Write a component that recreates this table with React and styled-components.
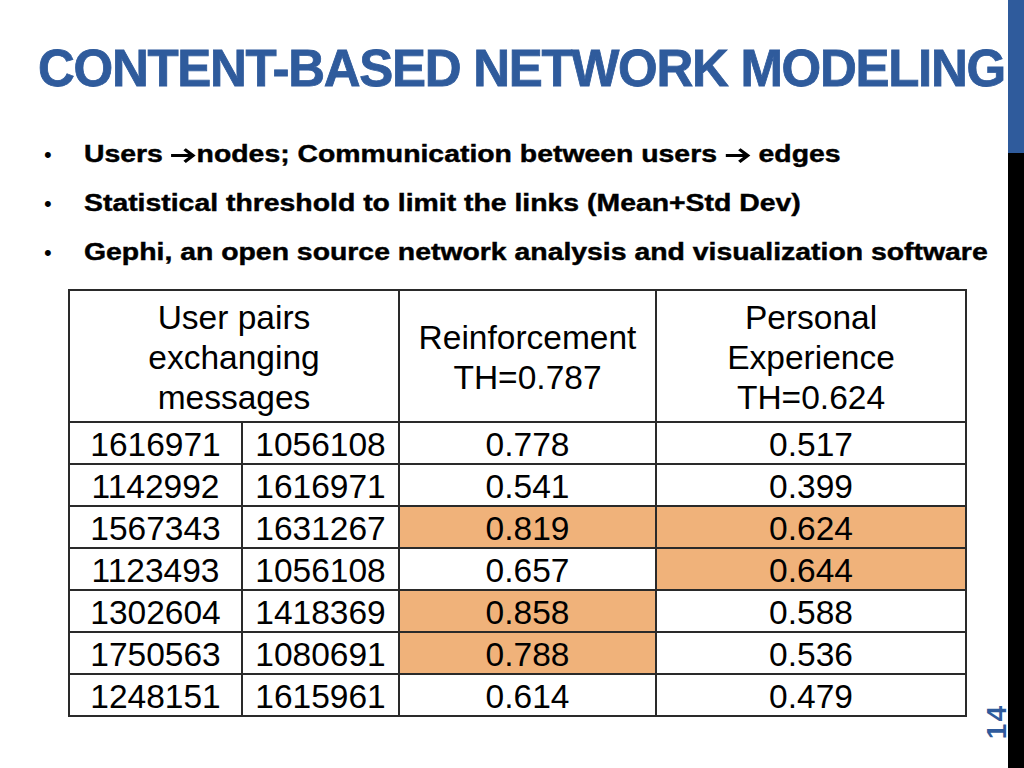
import React from "react";
import styled, { createGlobalStyle } from "styled-components";

const GlobalStyle = createGlobalStyle`
  html, body { margin: 0; padding: 0; background: #ffffff; }
  body { font-family: "Liberation Sans", Arial, sans-serif; color: #000; }
`;

const BLUE = "#2f5b9c";
const ORANGE = "#f0b27a";

const Slide = styled.div`
  position: relative;
  display: flex;
  width: 1024px;
  height: 768px;
  overflow: hidden;
  background: #fff;
`;

const Main = styled.main`
  flex: 1;
  display: flex;
  flex-direction: column;
  padding-left: 38px;
`;

const SideBar = styled.div`
  width: 16px;
  display: flex;
  flex-direction: column;
`;

const SideBlue = styled.div`
  height: 153px;
  background: ${BLUE};
`;

const SideBlack = styled.div`
  flex: 1;
  background: #000;
`;

const Title = styled.h1`
  margin: 43px 0 0 0;
  font-family: "Liberation Sans", Arial, sans-serif;
  font-weight: 700;
  font-size: 51px;
  line-height: 51px;
  letter-spacing: -1.3px;
  color: ${BLUE};
  -webkit-text-stroke: 0.8px ${BLUE};
  white-space: nowrap;
`;

const Bullets = styled.ul`
  list-style: none;
  margin: 36px 0 0 0;
  padding: 0;
`;

const Bullet = styled.li`
  display: flex;
  height: 49px;
  line-height: 49px;
  font-size: 22px;
  font-weight: 700;
  white-space: nowrap;
  &::before {
    content: "•";
    width: 46px;
    padding-left: 6px;
    box-sizing: border-box;
    font-weight: 400;
  }
`;

const BulletText = styled.span`
  display: inline-block;
  transform: scaleX(1.29) scaleY(1.05);
  transform-origin: left center;
  -webkit-text-stroke: 0.4px #000;
`;

const ArrowSvg = styled.svg`
  display: inline-block;
  width: 20px;
  height: 15px;
  vertical-align: -1px;
`;

const Arrow = () => (
  <ArrowSvg viewBox="0 0 20 15" fill="none" stroke="#000" strokeWidth="2.8" strokeLinecap="butt" strokeLinejoin="miter">
    <path d="M0.5 7.5 H17.5" />
    <path d="M11 1.5 L17.5 7.5 L11 13.5" />
  </ArrowSvg>
);

const Table = styled.table`
  margin: 12px 0 0 30px;
  border-collapse: collapse;
  width: 897px;
  table-layout: fixed;
  font-size: 33.5px;
  font-family: "Liberation Sans", Arial, sans-serif;
`;

const Cell = styled.td`
  border: 2px solid #2a2a2a;
  padding: 4px 0 0 0;
  text-align: center;
  vertical-align: middle;
  background: ${(p) => (p.$hi ? ORANGE : "#fff")};
  height: ${(p) => (p.$head ? "126px" : "36px")};
  line-height: ${(p) => (p.$head ? "40px" : "36px")};
`;

const PageNum = styled.div`
  position: absolute;
  left: 983px;
  top: 704px;
  writing-mode: vertical-rl;
  transform: rotate(180deg);
  font-size: 28px;
  font-weight: 700;
  line-height: 28px;
  letter-spacing: 2px;
  color: ${BLUE};
`;

const rows = [
  ["1616971", "1056108", "0.778", "0.517", false, false],
  ["1142992", "1616971", "0.541", "0.399", false, false],
  ["1567343", "1631267", "0.819", "0.624", true, true],
  ["1123493", "1056108", "0.657", "0.644", false, true],
  ["1302604", "1418369", "0.858", "0.588", true, false],
  ["1750563", "1080691", "0.788", "0.536", true, false],
  ["1248151", "1615961", "0.614", "0.479", false, false],
];

export default function App() {
  return (
    <>
      <GlobalStyle />
      <Slide>
        <Main>
          <Title>CONTENT-BASED NETWORK MODELING</Title>
          <Bullets>
            <Bullet>
              <BulletText>
                Users <Arrow />nodes; Communication between users <Arrow /> edges
              </BulletText>
            </Bullet>
            <Bullet>
              <BulletText>Statistical threshold to limit the links (Mean+Std Dev)</BulletText>
            </Bullet>
            <Bullet>
              <BulletText>Gephi, an open source network analysis and visualization software</BulletText>
            </Bullet>
          </Bullets>
          <Table>
            <colgroup>
              <col style={{ width: "173px" }} />
              <col style={{ width: "157px" }} />
              <col style={{ width: "257px" }} />
              <col style={{ width: "310px" }} />
            </colgroup>
            <tbody>
              <tr>
                <Cell $head colSpan={2}>
                  User pairs
                  <br />
                  exchanging
                  <br />
                  messages
                </Cell>
                <Cell $head>
                  Reinforcement
                  <br />
                  TH=0.787
                </Cell>
                <Cell $head>
                  Personal
                  <br />
                  Experience
                  <br />
                  TH=0.624
                </Cell>
              </tr>
              {rows.map((r, i) => (
                <tr key={i}>
                  <Cell>{r[0]}</Cell>
                  <Cell>{r[1]}</Cell>
                  <Cell $hi={r[4]}>{r[2]}</Cell>
                  <Cell $hi={r[5]}>{r[3]}</Cell>
                </tr>
              ))}
            </tbody>
          </Table>
        </Main>
        <SideBar>
          <SideBlue />
          <SideBlack />
        </SideBar>
        <PageNum>14</PageNum>
      </Slide>
    </>
  );
}
